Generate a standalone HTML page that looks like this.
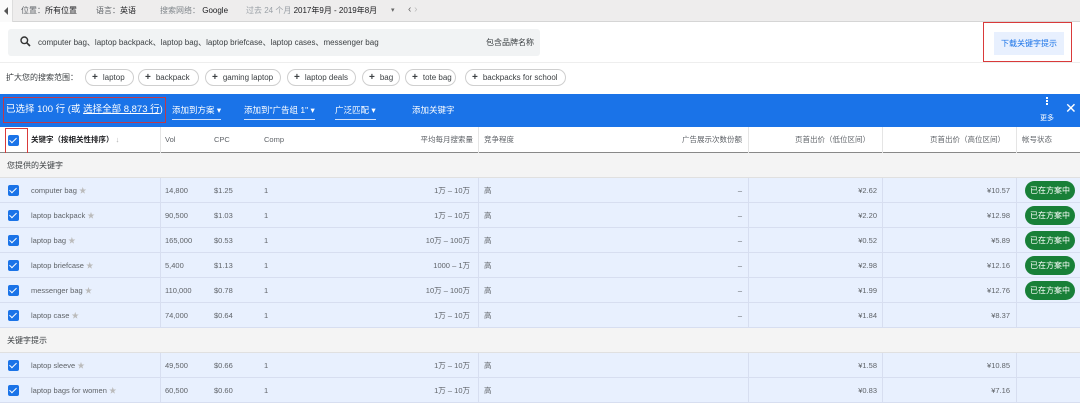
<!DOCTYPE html>
<html><head><meta charset="utf-8"><style>
*{margin:0;padding:0;box-sizing:border-box}
body{width:1080px;height:403px;overflow:hidden;background:#fff;font-family:"Liberation Sans","Noto Sans CJK SC",sans-serif;color:#3c4043;position:relative;font-size:8px}
.a{position:absolute;white-space:nowrap}
.top{left:0;top:0;width:1080px;height:22px;background:#eeeded;border-bottom:1px solid #d5d5d5}
.search{left:8px;top:29px;width:532px;height:27px;background:#f1f3f4;border-radius:3px}
.chip{top:69px;height:17px;border:1px solid #cfcfcf;border-radius:9px;font-size:8px;line-height:15px;padding-left:6px;color:#3c4043}
.chip b{font-weight:bold;margin-right:5px;font-size:10px}
.blue{left:0;top:94px;width:1080px;height:33px;background:#1a73e8;color:#fff}
.row{left:0;width:1080px;height:25px;background:#e8f0fe;border-bottom:1px solid #d7def0}
.grp{left:0;width:1080px;height:25px;background:#f4f4f4;border-bottom:1px solid #e0e0e0;font-size:8px;line-height:25px;padding-left:7px}
.cb{position:absolute;left:8px;top:7px;width:11px;height:11px;background:#1a73e8;border-radius:2px}
.cb:after{content:"";position:absolute;left:3px;top:1px;width:3px;height:6px;border:solid #fff;border-width:0 1.5px 1.5px 0;transform:rotate(45deg)}
.c{position:absolute;top:0;line-height:25px;font-size:7.5px;color:#5f6368}
.r{text-align:right}
.v{position:absolute;top:0;width:1px;height:25px;background:#d7def0}
.pill{position:absolute;left:1025px;top:3px;width:50px;height:19px;background:#188038;color:#fff;border-radius:10px;font-size:8px;line-height:19px;text-align:center}
.h{position:absolute;top:0;line-height:26px;font-size:7.5px;color:#5f6368}
</style></head><body>
<div class="a top"></div>
<div class="a" style="left:0;top:0;width:13px;height:22px;background:#fafafa;border-right:1px solid #ddd"></div>
<div class="a" style="left:4px;top:7px;width:0;height:0;border-top:4px solid transparent;border-bottom:4px solid transparent;border-right:4px solid #555"></div>
<div class="a" style="left:21px;top:4px;font-size:8px;line-height:14px;color:#5f6368">位置：<span style="color:#202124">所有位置</span></div>
<div class="a" style="left:96px;top:4px;font-size:8px;line-height:14px;color:#5f6368">语言：<span style="color:#202124">英语</span></div>
<div class="a" style="left:160px;top:4px;font-size:8px;line-height:14px;color:#80868b">搜索网络： <span style="color:#202124">Google</span></div>
<div class="a" style="left:246px;top:4px;font-size:8px;line-height:14px;color:#9aa0a6">过去 24 个月 <span style="color:#202124">2017年9月 - 2019年8月</span></div>
<div class="a" style="left:391px;top:4px;font-size:7px;line-height:14px;color:#666">▾</div>
<div class="a" style="left:408px;top:3px;font-size:10px;line-height:14px;color:#666">‹ <span style="color:#bbb">›</span></div>

<div class="a search"></div>
<svg class="a" style="left:20px;top:36px" width="11" height="11" viewBox="0 0 11 11"><circle cx="4.3" cy="4.3" r="3.3" fill="none" stroke="#333" stroke-width="1.4"/><path d="M6.8 6.8L10 10" stroke="#333" stroke-width="1.6"/></svg>
<div class="a" style="left:38px;top:37px;font-size:8px;line-height:11px;color:#3c4043">computer bag、laptop backpack、laptop bag、laptop briefcase、laptop cases、messenger bag</div>
<div class="a" style="left:486px;top:37px;font-size:8px;line-height:11px;color:#3c4043">包含品牌名称</div>
<div class="a" style="left:0;top:62px;width:1080px;height:1px;background:#eee"></div>

<div class="a" style="left:994px;top:32px;width:70px;height:23px;background:#e8f0fe;color:#1a73e8;font-size:8px;line-height:23px;text-align:center">下载关键字提示</div>
<div class="a" style="left:983px;top:22px;width:89px;height:40px;border:1.5px solid #d93a3a"></div>

<div class="a" style="left:6px;top:72px;font-size:8px;line-height:11px">扩大您的搜索范围：</div>
<div class="a chip" style="left:85px;width:49px"><b>+</b>laptop</div>
<div class="a chip" style="left:138px;width:61px"><b>+</b>backpack</div>
<div class="a chip" style="left:205px;width:76px"><b>+</b>gaming laptop</div>
<div class="a chip" style="left:287px;width:69px"><b>+</b>laptop deals</div>
<div class="a chip" style="left:362px;width:38px"><b>+</b>bag</div>
<div class="a chip" style="left:405px;width:51px"><b>+</b>tote bag</div>
<div class="a chip" style="left:465px;width:101px"><b>+</b>backpacks for school</div>

<div class="a blue"></div>
<div class="a" style="left:6px;top:103px;font-size:9.5px;line-height:13px;color:#fff">已选择 100 行 (或 <u>选择全部 8,873 行</u>)</div>
<div class="a" style="left:3px;top:97px;width:163px;height:26px;border:1.5px solid #c0394b"></div>
<div class="a" style="left:172px;top:104px;font-size:8.5px;line-height:12px;color:#fff;border-bottom:1px solid #cfe0fb;padding-bottom:3px">添加到方案 ▾</div>
<div class="a" style="left:244px;top:104px;font-size:8.5px;line-height:12px;color:#fff;border-bottom:1px solid #cfe0fb;padding-bottom:3px">添加到"广告组 1" ▾</div>
<div class="a" style="left:335px;top:104px;font-size:8.5px;line-height:12px;color:#fff;border-bottom:1px solid #cfe0fb;padding-bottom:3px">广泛匹配 ▾</div>
<div class="a" style="left:412px;top:104px;font-size:8.5px;line-height:12px;color:#fff">添加关键字</div>
<div class="a" style="left:1046px;top:97px;width:2px;height:2px;background:#fff;box-shadow:0 3px #fff,0 6px #fff"></div>
<div class="a" style="left:1040px;top:113px;font-size:7px;color:#fff">更多</div>
<div class="a" style="left:1065px;top:100px;font-size:14px;color:#fff;line-height:16px">✕</div>

<!-- header -->
<div class="a" style="left:0;top:127px;width:1080px;height:26px;background:#fff;border-bottom:1.5px solid #888">
<div class="cb" style="top:8px"></div>
<div class="h" style="left:31px;color:#202124;font-weight:bold">关键字（按相关性排序） <span style="color:#aaa;font-weight:normal">↓</span></div>
<div class="h" style="left:165px">Vol</div><div class="h" style="left:214px">CPC</div><div class="h" style="left:264px">Comp</div>
<div class="h r" style="left:380px;width:93px">平均每月搜索量</div>
<div class="h" style="left:484px">竞争程度</div>
<div class="h r" style="left:640px;width:102px">广告展示次数份额</div>
<div class="h r" style="left:770px;width:100px">页首出价（低位区间）</div>
<div class="h r" style="left:900px;width:105px">页首出价（高位区间）</div>
<div class="h" style="left:1022px">帐号状态</div>
<div class="v" style="left:160px;height:26px;background:#e5e5e5"></div><div class="v" style="left:478px;height:26px;background:#e5e5e5"></div><div class="v" style="left:748px;height:26px;background:#e5e5e5"></div><div class="v" style="left:882px;height:26px;background:#e5e5e5"></div><div class="v" style="left:1016px;height:26px;background:#e5e5e5"></div>
</div>
<div class="a" style="left:5px;top:128px;width:23px;height:27px;border:1.5px solid #d93a3a"></div>

<div class="a grp" style="top:153px">您提供的关键字</div>

<div id="rows"></div>
<script>
var d=[["computer bag","14,800","$1.25","1万 – 10万","2.62","10.57",1],
["laptop backpack","90,500","$1.03","1万 – 10万","2.20","12.98",1],
["laptop bag","165,000","$0.53","10万 – 100万","0.52","5.89",1],
["laptop briefcase","5,400","$1.13","1000 – 1万","2.98","12.16",1],
["messenger bag","110,000","$0.78","10万 – 100万","1.99","12.76",1],
["laptop case","74,000","$0.64","1万 – 10万","1.84","8.37",0],
null,
["laptop sleeve","49,500","$0.66","1万 – 10万","1.58","10.85",0],
["laptop bags for women","60,500","$0.60","1万 – 10万","0.83","7.16",0]];
var h="";
d.forEach(function(r,i){var t=178+i*25;
if(!r){h+='<div class="a grp" style="top:'+t+'px">关键字提示</div>';return;}
h+='<div class="a row" style="top:'+t+'px"><div class="cb"></div>'+
'<div class="c" style="left:31px">'+r[0]+' <span style="color:#bbb">★</span></div>'+
'<div class="c" style="left:165px">'+r[1]+'</div><div class="c" style="left:214px">'+r[2]+'</div><div class="c" style="left:264px">1</div>'+
'<div class="c r" style="left:380px;width:90px">'+r[3]+'</div><div class="c" style="left:484px">高</div>'+
'<div class="c r" style="left:700px;width:42px">'+(r[6]||i<6?'–':'')+'</div>'+
'<div class="c r" style="left:800px;width:77px">¥'+r[4]+'</div><div class="c r" style="left:930px;width:80px">¥'+r[5]+'</div>'+
(r[6]?'<div class="pill">已在方案中</div>':'')+
'<div class="v" style="left:160px"></div><div class="v" style="left:478px"></div><div class="v" style="left:748px"></div><div class="v" style="left:882px"></div><div class="v" style="left:1016px"></div></div>';});
document.getElementById("rows").innerHTML=h;
</script>
</body></html>
